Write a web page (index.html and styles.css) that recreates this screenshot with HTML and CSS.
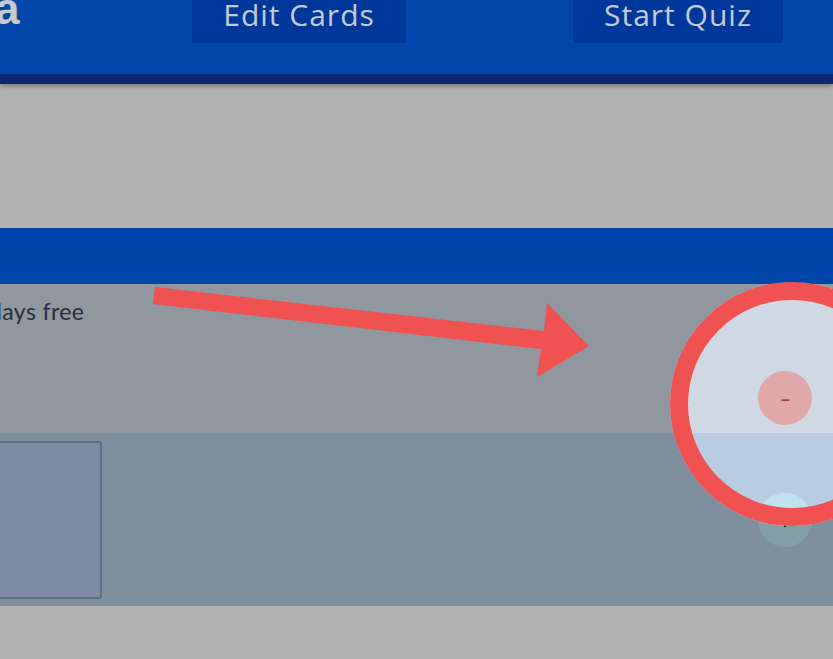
FILE: index.html
```
<!DOCTYPE html>
<html lang="en">
<head>
<meta charset="utf-8">
<title>Quiz</title>
<link rel="stylesheet" href="styles.css">
</head>
<body>
<header class="topbar">
  <div class="bar">
    <span class="logo">a</span>
    <nav class="nav">
      <a class="nav-btn nav-edit" href="#">Edit Cards</a>
      <a class="nav-btn nav-quiz" href="#">Start Quiz</a>
    </nav>
  </div>
</header>
<main class="page">
  <section class="hero"></section>
  <section class="band"></section>
  <section class="plan">
    <div class="row row-free">
      <p class="row-label">days free</p>
      <button class="round-btn minus-btn" type="button"><span class="minus">−</span></button>
    </div>
    <div class="row row-card">
      <div class="card-box"></div>
      <button class="round-btn plus-btn" type="button"><span class="plus-dot"></span></button>
    </div>
  </section>
  <div class="spacer"></div>
</main>
<div class="spotlight"></div>
<svg class="arrow" width="833" height="659" viewBox="0 0 833 659" aria-hidden="true">
  <polygon points="155,287 544,331 547,303 589,346 537,377 541,349 153,304" fill="#f05252"/>
</svg>
</body>
</html>
```
FILE: styles.css
```
* { box-sizing: border-box; }
html, body {
  margin: 0;
  padding: 0;
  width: 833px;
  height: 659px;
  overflow: hidden;
  background: #ffffff;
  font-family: "Open Sans", Lato, sans-serif;
}
.topbar {
  position: relative;
  z-index: 20;
  background: #0046ab;
  border-bottom: 10px solid #0c2672;
  box-shadow: 0 2px 5px rgba(0, 0, 0, 0.35);
}
.bar {
  height: 74px;
  display: flex;
  align-items: flex-start;
}
.logo {
  flex: none;
  width: 25px;
  font-family: "Liberation Sans", Arial, sans-serif;
  font-weight: 700;
  font-size: 44px;
  line-height: 44px;
  color: #c9c9c9;
  margin-left: -5px;
  margin-top: -13px;
}
.nav {
  display: flex;
  margin-left: 172px;
  gap: 167px;
}
.nav-btn {
  display: block;
  height: 43px;
  background: #00379a;
  color: #c5cad6;
  text-decoration: none;
  font-size: 30px;
  line-height: 30px;
  letter-spacing: 1px;
  text-align: center;
}
.nav-edit { width: 214px; }
.nav-quiz { width: 210px; }
.hero {
  height: 144px;
  background: #ffffff;
}
.band {
  height: 56px;
  background: #0064f4;
}
.plan {
  display: flex;
  flex-direction: column;
}
.row {
  display: flex;
  justify-content: space-between;
  padding-right: 21px;
}
.row-free {
  height: 149px;
  background: #d0d8e4;
  align-items: flex-end;
  padding-bottom: 8px;
}
.row-label {
  align-self: flex-start;
  margin: 13px 0 0 -11px;
  font-family: Lato, sans-serif;
  font-size: 23px;
  line-height: 28px;
  letter-spacing: 0.4px;
  color: #39455b;
}
.row-card {
  height: 173px;
  background: #b8cde2;
  align-items: center;
}
.card-box {
  width: 104px;
  height: 158px;
  margin-left: -2px;
  background: #b7c8ed;
  border: 2px solid #83a0b7;
  border-radius: 3px;
}
.round-btn {
  width: 54px;
  height: 54px;
  border: none;
  border-radius: 50%;
  padding: 0;
  display: flex;
  align-items: center;
  justify-content: center;
}
.minus-btn { background: #e0a8a8; }
.minus {
  font-family: "Open Sans", sans-serif;
  font-weight: 700;
  font-size: 16px;
  line-height: 16px;
  color: #9c4040;
  margin-top: 3px;
}
.plus-btn { background: #bee3ec; }
.plus-dot {
  width: 2px;
  height: 2px;
  background: #1a3a6a;
  margin-top: 12px;
}
.spotlight {
  position: absolute;
  z-index: 10;
  left: 670px;
  top: 282px;
  width: 244px;
  height: 244px;
  border: 18px solid #f05252;
  border-radius: 50%;
  box-shadow: 0 0 0 2000px rgba(0, 0, 0, 0.3);
}
.arrow {
  position: absolute;
  z-index: 30;
  left: 0;
  top: 0;
}
```
